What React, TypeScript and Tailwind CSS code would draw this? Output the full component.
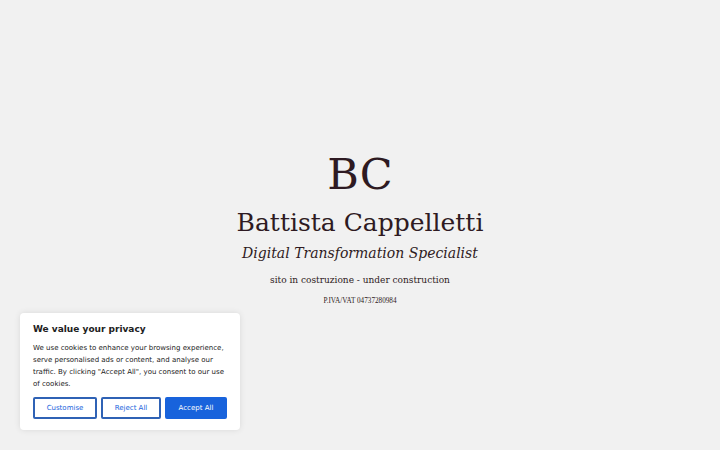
import React from "react";

export default function App() {
  return (
    <div className="relative w-[720px] h-[450px] bg-[#f1f1f1] overflow-hidden">
      <div className="flex flex-col items-center pt-[150px] text-[#2e1a22] font-['DejaVu_Serif',serif]">
        <div className="text-[43px] leading-[48px]">BC</div>
        <div className="text-[25px] leading-[30px] mt-[10px]">Battista Cappelletti</div>
        <div className="italic text-[14px] leading-[20px] mt-[5px]">Digital Transformation Specialist</div>
        <div className="text-[9px] leading-[14px] mt-[10px]">sito in costruzione - under construction</div>
        <div className="font-['Liberation_Serif',serif] text-[7.2px] leading-[10px] mt-[9px]">P.IVA/VAT 04737280984</div>
      </div>
      <div className="absolute left-[20px] top-[313px] w-[220px] h-[117px] bg-white rounded-[4px] shadow-[0_0_6px_rgba(0,0,0,0.10)] px-[13px] pt-[10px] font-['DejaVu_Sans',sans-serif]">
        <div className="text-[9px] font-bold text-[#212121] leading-[12px]">We value your privacy</div>
        <p className="mt-[7px] text-[7px] leading-[12px] text-[#212121]">
          We use cookies to enhance your browsing experience, serve personalised ads or content, and analyse our traffic. By clicking "Accept All", you consent to our use of cookies.
        </p>
        <div className="flex gap-[4px] mt-[7px]">
          <button className="w-[64px] h-[22px] border-2 border-[#2f62b5] rounded-[2px] text-[#1863dc] text-[7px]">Customise</button>
          <button className="w-[60px] h-[22px] border-2 border-[#2f62b5] rounded-[2px] text-[#1863dc] text-[7px]">Reject All</button>
          <button className="w-[62px] h-[22px] bg-[#1863dc] border-2 border-[#1863dc] rounded-[2px] text-white text-[7px]">Accept All</button>
        </div>
      </div>
    </div>
  );
}
